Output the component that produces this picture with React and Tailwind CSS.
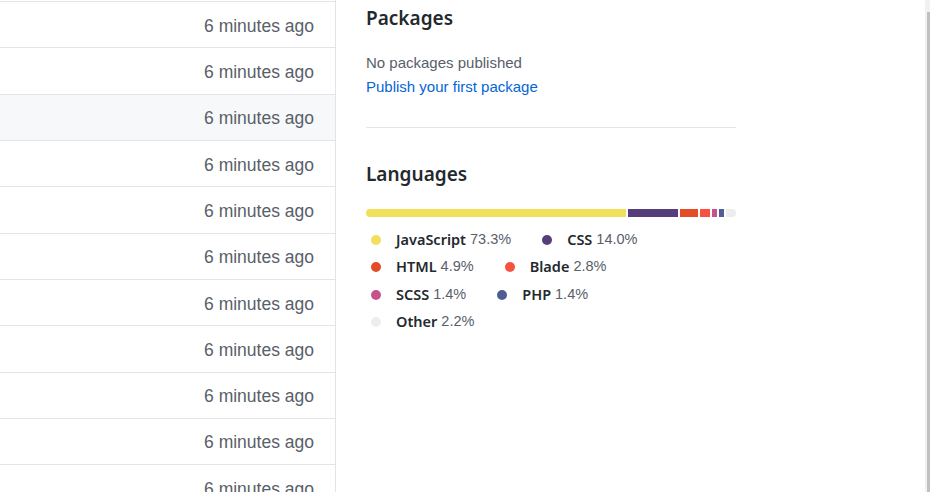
const rows = Array.from({ length: 11 }, (_, i) => ({ id: i, age: "6 minutes ago" }));

const langs = [
  { name: "JavaScript", pct: "73.3%", color: "bg-[#f1e05a]" },
  { name: "CSS", pct: "14.0%", color: "bg-[#563d7c]" },
  { name: "HTML", pct: "4.9%", color: "bg-[#e34c26]" },
  { name: "Blade", pct: "2.8%", color: "bg-[#f7523f]" },
  { name: "SCSS", pct: "1.4%", color: "bg-[#c6538c]" },
  { name: "PHP", pct: "1.4%", color: "bg-[#4f5d95]" },
  { name: "Other", pct: "2.2%", color: "bg-[#ededed]" },
];

const LanguageBar = () => (
  <div className="mt-[20px] flex h-[8px] w-[370px] gap-[2px] overflow-hidden rounded-full">
    <span className="w-[260px] bg-[#f1e05a]" />
    <span className="w-[50px] bg-[#563d7c]" />
    <span className="w-[18px] bg-[#e34c26]" />
    <span className="w-[10px] bg-[#f7523f]" />
    <span className="w-[5px] bg-[#c6538c]" />
    <span className="w-[5px] bg-[#4f5d95]" />
    <span className="flex-1 bg-[#ededed]" />
  </div>
);

const App = () => {
  return (
    <div className="flex h-[492px] w-[930px] overflow-hidden bg-white font-['Liberation_Sans',Arial,sans-serif]">
      {/* file list */}
      <div className="w-[336px] shrink-0 border-r border-[#e1e4e8] pt-[1px]">
        {rows.map((row) => (
          <div
            key={row.id}
            className={`flex h-[46.33px] items-center justify-end border-t border-[#e1e4e8] pt-[2px] pr-[21px] ${
              row.id === 2 ? "bg-[#f6f8fa]" : ""
            }`}
          >
            <span className="text-[17.5px] text-[#586069]">{row.age}</span>
          </div>
        ))}
      </div>

      {/* sidebar */}
      <div className="w-[370px] shrink-0 ml-[30px] pt-[3px]">
        <h2 className="h-[30px] font-['Noto_Sans',sans-serif] text-[19px] leading-[30px] font-semibold text-[#24292e]">
          Packages
        </h2>
        <div className="mt-[18px] text-[15px] leading-[24px]">
          <p className="text-[#586069]">No packages published</p>
          <a className="text-[#0366d6]">Publish your first package</a>
        </div>
        <hr className="mt-[28px] border-t border-[#e1e4e8]" />

        <h2 className="mt-[31px] h-[30px] font-['Noto_Sans',sans-serif] text-[19px] leading-[30px] font-semibold text-[#24292e]">
          Languages
        </h2>
        <LanguageBar />
        <ul className="mt-[9px] flex flex-wrap">
          {langs.map((l) => (
            <li key={l.name} className="mr-[26px] flex h-[27.5px] items-center text-[14.5px]">
              <span className={`ml-[5px] mr-[15px] h-[10px] w-[10px] rounded-full ${l.color}`} />
              <span className="font-['Noto_Sans',sans-serif] font-semibold text-[#24292e]">{l.name}</span>
              <span className="ml-[4px] text-[#586069]">{l.pct}</span>
            </li>
          ))}
        </ul>
      </div>

      <div className="flex-1" />

      {/* scrollbar remnant */}
      <div className="flex w-[5px] shrink-0 flex-col bg-[#f1f1f1] pl-[2px] pt-[12px]">
        <div className="flex-1 bg-[#c1c1c1]" />
      </div>
    </div>
  );
};

export default App;
